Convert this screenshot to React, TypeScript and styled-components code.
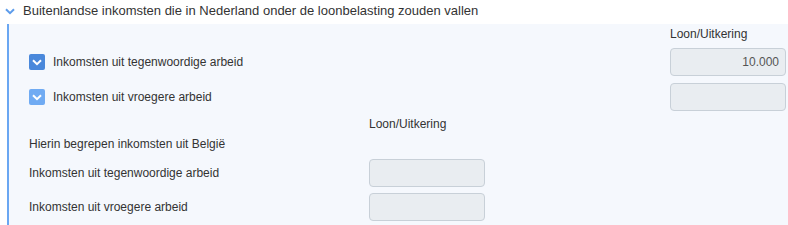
import styled, { createGlobalStyle } from "styled-components";

const GlobalStyle = createGlobalStyle`
  html, body {
    margin: 0;
    padding: 0;
    background: #ffffff;
  }
  body {
    font-family: "Liberation Sans", Arial, sans-serif;
    color: #333333;
  }
`;

type Row = { label: string; value?: string; checked?: "dark" | "light" };

const foreignRows: Row[] = [
  { label: "Inkomsten uit tegenwoordige arbeid", value: "10.000", checked: "dark" },
  { label: "Inkomsten uit vroegere arbeid", value: "", checked: "light" },
];

const belgiumRows: Row[] = [
  { label: "Inkomsten uit tegenwoordige arbeid" },
  { label: "Inkomsten uit vroegere arbeid" },
];

function Chevron({ color }: { color: string }) {
  return (
    <svg width="10" height="7" viewBox="0 0 10 7">
      <path d="M1 1.2 L5 5.2 L9 1.2" fill="none" stroke={color} strokeWidth="2" />
    </svg>
  );
}

export default function App() {
  return (
    <>
      <GlobalStyle />
      <Section>
        <SectionHeader>
          <Chevron color="#5d9ceb" />
          <SectionTitle>Buitenlandse inkomsten die in Nederland onder de loonbelasting zouden vallen</SectionTitle>
        </SectionHeader>
        <Panel>
          <WideGrid>
            <ColumnHead>Loon/Uitkering</ColumnHead>
            {foreignRows.map((row) => (
              <FieldRow key={row.label}>
                <CheckLabel>
                  <CheckBox $tone={row.checked}>
                    <Chevron color="#ffffff" />
                  </CheckBox>
                  <Label>{row.label}</Label>
                </CheckLabel>
                <Amount>{row.value}</Amount>
              </FieldRow>
            ))}
          </WideGrid>
          <SubGrid>
            <ColumnHead>Loon/Uitkering</ColumnHead>
            <SubTitle>Hierin begrepen inkomsten uit België</SubTitle>
            {belgiumRows.map((row) => (
              <FieldRow key={row.label}>
                <Label>{row.label}</Label>
                <Amount />
              </FieldRow>
            ))}
          </SubGrid>
        </Panel>
      </Section>
    </>
  );
}

const Section = styled.section`
  width: 788px;
`;

const SectionHeader = styled.div`
  display: flex;
  align-items: center;
  gap: 8px;
  height: 24px;
  padding-left: 5px;
  svg {
    margin-top: -1px;
  }
`;

const SectionTitle = styled.h2`
  margin: -3px 0 0;
  font-size: 13px;
  font-weight: 400;
  line-height: 15px;
  color: #333333;
`;

const Panel = styled.div`
  margin-left: 7px;
  border-left: 2px solid #6aa7f2;
  background: #f5f8fd;
  padding: 3px 2px 10px 20px;
  display: flex;
  flex-direction: column;
  gap: 6px;
`;

const WideGrid = styled.div`
  display: grid;
  grid-template-columns: 1fr 116px;
  row-gap: 7px;
`;

const SubGrid = styled.div`
  display: grid;
  grid-template-columns: 340px 116px;
  row-gap: 6px;
`;

const FieldRow = styled.div`
  grid-column: 1 / -1;
  display: grid;
  grid-template-columns: subgrid;
  align-items: center;
  height: 28px;
`;

const ColumnHead = styled.div`
  grid-column: 2;
  font-size: 12px;
  line-height: 14px;
  color: #333333;
`;

const SubTitle = styled.div`
  grid-column: 1;
  font-size: 12px;
  line-height: 14px;
  color: #333333;
  margin-bottom: 2px;
`;

const CheckLabel = styled.label`
  display: flex;
  align-items: center;
  gap: 8px;
`;

const CheckBox = styled.span<{ $tone?: "dark" | "light" }>`
  width: 16px;
  height: 16px;
  border-radius: 2px;
  background: ${(p) => (p.$tone === "dark" ? "#4a88db" : "#70abf3")};
  display: flex;
  align-items: center;
  justify-content: center;
  svg {
    margin-top: 1px;
  }
`;

const Label = styled.span`
  font-size: 12px;
  line-height: 14px;
  color: #333333;
`;

const Amount = styled.div`
  box-sizing: border-box;
  height: 28px;
  border: 1px solid #c8d0d8;
  border-radius: 4px;
  background: #e9edf1;
  font-size: 12px;
  color: #555555;
  text-align: right;
  padding: 0 6px;
  line-height: 26px;
`;
